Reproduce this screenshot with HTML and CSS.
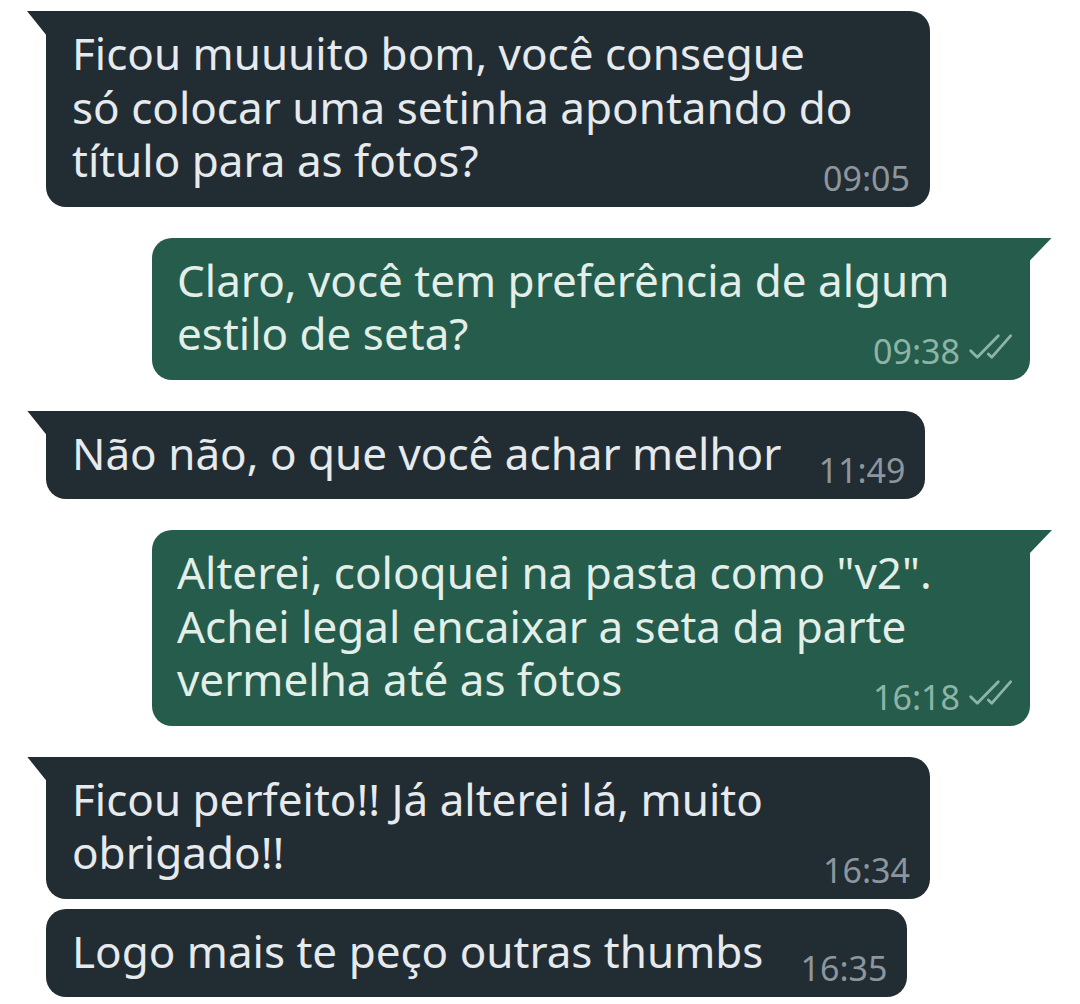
FILE: index.html
```html
<!DOCTYPE html>
<html lang="pt-BR">
  <head>
    <meta charset="UTF-8" />
    <meta name="viewport" content="width=device-width, initial-scale=1.0" />
    <title>Conversa</title>
    <link rel="stylesheet" href="styles.css">
  </head>
  <body>
    <div class="chat">
      <div class="msg in tail wide">
        <p class="text">Ficou muuuito bom, você consegue<br>só colocar uma setinha apontando do<br>título para as fotos?</p>
        <span class="meta">09:05</span>
      </div>

      <div class="msg out tail wide">
        <p class="text">Claro, você tem preferência de algum<br>estilo de seta?</p>
        <span class="meta">09:38
          <svg class="ticks" viewBox="0 0 46 27"><path d="M2.7 17.7 L9.3 24.3 L30.3 2.7 M20.3 21 L23.7 24.3 L42.7 2.7" /></svg>
        </span>
      </div>

      <div class="msg in tail">
        <p class="text">Não não, o que você achar melhor<span class="spacer"></span></p>
        <span class="meta">11:49</span>
      </div>

      <div class="msg out tail wide">
        <p class="text">Alterei, coloquei na pasta como "v2".<br>Achei legal encaixar a seta da parte<br>vermelha até as fotos</p>
        <span class="meta">16:18
          <svg class="ticks" viewBox="0 0 46 27"><path d="M2.7 17.7 L9.3 24.3 L30.3 2.7 M20.3 21 L23.7 24.3 L42.7 2.7" /></svg>
        </span>
      </div>

      <div class="msg in tail wide">
        <p class="text">Ficou perfeito!! Já alterei lá, muito<br>obrigado!!</p>
        <span class="meta">16:34</span>
      </div>

      <div class="msg in">
        <p class="text">Logo mais te peço outras thumbs<span class="spacer"></span></p>
        <span class="meta">16:35</span>
      </div>
    </div>
  </body>
</html>
```

FILE: styles.css
```css
body {
  margin: 0;
  padding: 0;
  background-color: #ffffff;
  font-family: "Noto Sans", "Open Sans", sans-serif;
}
.chat {
  display: flex;
  flex-direction: column;
  padding-top: 11px;
}
.msg {
  position: relative;
  display: flex;
  flex-direction: column;
  box-sizing: border-box;
  padding: 16px 20px 14px 26px;
  border-radius: 20px;
  width: fit-content;
}
.msg + .msg {
  margin-top: 10px;
}
.msg + .tail {
  margin-top: 31px;
}
.msg.wide {
  width: 884px;
}
.text {
  margin: 0;
  font-size: 44px;
  line-height: 53.5px;
  white-space: nowrap;
}
.spacer {
  display: inline-block;
  width: 124px;
}
.meta {
  align-self: flex-end;
  display: flex;
  align-items: center;
  gap: 10px;
  margin-top: -25px;
  font-size: 34px;
  line-height: 30px;
}
.ticks {
  width: 46px;
  height: 27px;
  margin-top: -8px;
  fill: none;
  stroke: currentColor;
  stroke-width: 2.8;
  stroke-linecap: round;
  stroke-linejoin: round;
}

/* incoming */
.in {
  align-self: flex-start;
  margin-left: 46px;
  background-color: #222c33;
  color: #e6eaec;
}
.in .meta {
  color: #8c969c;
}
.in.tail {
  border-top-left-radius: 0;
}
.in.tail::before {
  content: "";
  position: absolute;
  top: 0;
  left: -19px;
  width: 20px;
  height: 25px;
  background-color: #222c33;
  clip-path: polygon(0 0, 100% 0, 100% 100%);
}

/* outgoing */
.out {
  align-self: flex-end;
  margin-right: 50px;
  padding-left: 25px;
  padding-right: 16px;
  background-color: #265c4b;
  color: #e2efe9;
}
.out.wide {
  width: 878px;
}
.out .meta {
  gap: 8px;
  color: #8db5a7;
}
.out.tail {
  border-top-right-radius: 0;
}
.out.tail::before {
  content: "";
  position: absolute;
  top: 0;
  right: -22px;
  width: 23px;
  height: 24px;
  background-color: #265c4b;
  clip-path: polygon(0 0, 100% 0, 0 100%);
}
```
